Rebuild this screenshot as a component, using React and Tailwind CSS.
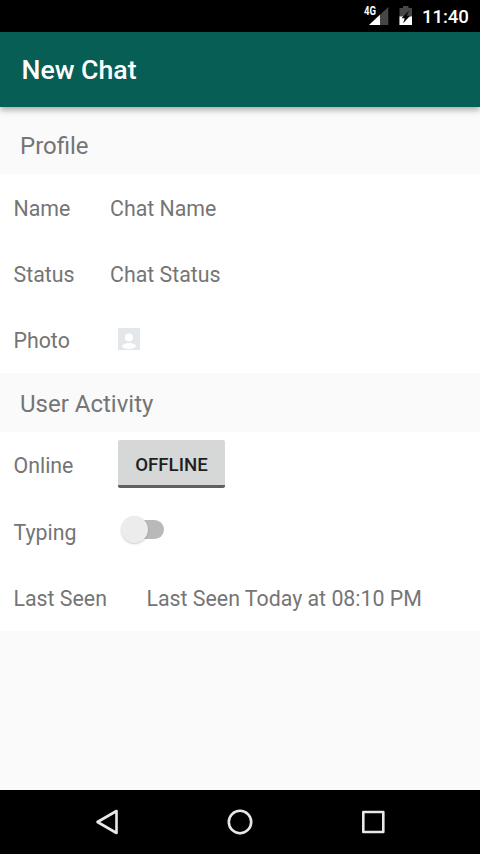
import clsx from "clsx";

function SignalIcon() {
  return (
    <svg width="26" height="22" viewBox="0 0 26 22">
      <path d="M24.3 2v18H5z" fill="#464646" />
      <path d="M16 9.7V20H5z" fill="#fff" />
      <text x="0" y="10" fill="#fff" fontFamily="Roboto" fontSize="12" fontWeight="700" textLength="12" lengthAdjust="spacingAndGlyphs">
        4G
      </text>
    </svg>
  );
}

function BatteryIcon() {
  return (
    <svg width="14" height="22" viewBox="0 0 14 22">
      <path d="M4 1h5.5v2H13v17H.5V3H4z" fill="#464646" />
      <path d="M.5 11.5H13V20H.5z" fill="#fff" />
      <path d="M10.3 5.3 2.6 13.2h3.2L4 18.3l7.2-7.5H7.6z" fill="#000" />
    </svg>
  );
}

function PhotoIcon() {
  return (
    <svg width="22" height="22" viewBox="0 0 22 22">
      <path d="M0 0h22v22H0z" fill="#e3e7e9" />
      <circle cx="11" cy="9.6" r="4" fill="#fff" />
      <ellipse cx="11" cy="18" rx="7" ry="3" fill="#fff" />
    </svg>
  );
}

function Section({ title, className, children }) {
  return (
    <section>
      <h2 className={clsx("flex items-center pl-5 text-[24px] leading-none", className)}>{title}</h2>
      <div className="bg-white">{children}</div>
    </section>
  );
}

function Row({ label, wide, children }) {
  return (
    <div className="flex h-[66.33px] items-center pt-[2px] pl-[13.5px]">
      <span className={clsx("shrink-0", wide ? "w-[133px]" : "w-[96.5px]")}>{label}</span>
      {children}
    </div>
  );
}

export default function App() {
  return (
    <div className="flex h-screen w-full flex-col overflow-hidden bg-[#fafafa] font-['Roboto',sans-serif] text-[21.33px] leading-none text-[#757575]">
      <div className="flex h-8 shrink-0 items-center bg-black pl-[364px] text-white">
        <SignalIcon />
        <span className="ml-[9px]">
          <BatteryIcon />
        </span>
        <span className="ml-[9px] pt-[2px] text-[18.67px] font-medium tracking-[-0.1px]">11:40</span>
      </div>

      <header className="relative flex h-[75px] shrink-0 items-center bg-[#075e54] pl-[21.5px] pt-0.5 shadow-[0_3px_6px_rgba(0,0,0,0.32)]">
        <h1 className="text-[26.67px] leading-none font-medium text-white">New Chat</h1>
      </header>

      <main className="flex-1">
        <Section title="Profile" className="h-[67px] pt-[11px]">
          <Row label="Name">Chat Name</Row>
          <Row label="Status">Chat Status</Row>
          <Row label="Photo">
            <span className="ml-[7.5px] -mt-[3px]">
              <PhotoIcon />
            </span>
          </Row>
        </Section>

        <Section title="User Activity" className="h-[59px] pt-[3px]">
          <Row label="Online">
            <button className="ml-[8px] -mt-[4px] h-[48px] w-[107px] rounded-[2px] border-b-[3px] border-[#606060] bg-[#d6d7d7] pt-[5px] text-[18.67px] font-medium text-[#1f1f1f]">
              OFFLINE
            </button>
          </Row>
          <Row label="Typing">
            <span className="ml-[10.5px] -mt-[5px] flex items-center">
              <span className="z-10 size-[27px] rounded-full bg-[#ececec] shadow-[0_1px_2px_rgba(0,0,0,0.2)]" />
              <span className="-ml-[20px] h-[19px] w-[36px] rounded-full bg-[#b9b9b9]" />
            </span>
          </Row>
          <Row label="Last Seen" wide>
            Last Seen Today at 08:10 PM
          </Row>
        </Section>
      </main>

      <nav className="flex h-16 shrink-0 items-center bg-black">
        <svg width="480" height="64" viewBox="0 0 480 64" fill="none" stroke="#e8e8e8" strokeWidth="2.6" strokeLinejoin="round">
          <path d="M116.5 21v22L97.5 32z" />
          <circle cx="240" cy="32" r="11.2" />
          <path d="M363.3 22h20v20h-20z" />
        </svg>
      </nav>
    </div>
  );
}
